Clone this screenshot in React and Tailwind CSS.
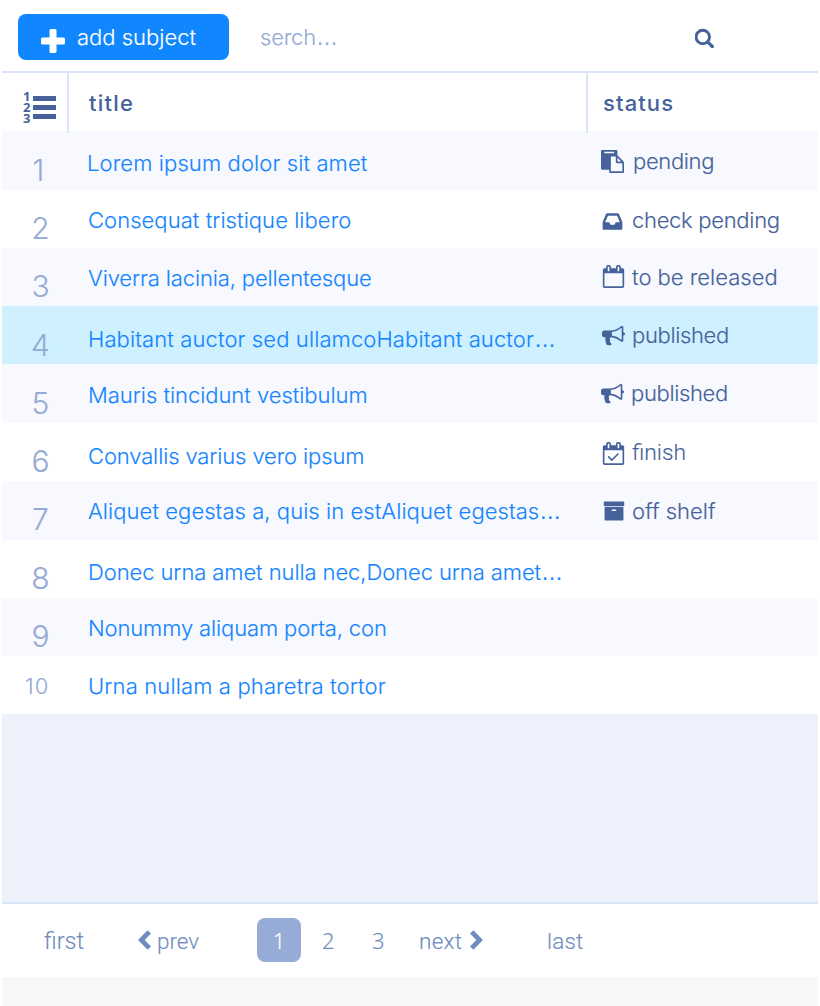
import React from "react";

const ICONS = {
  paste: "M768 1664h896v-640h-416q-40 0-68-28t-28-68v-416h-384v1152zm256-1440v-64q0-13-9.5-22.5t-22.5-9.5h-704q-13 0-22.5 9.5t-9.5 22.5v64q0 13 9.5 22.5t22.5 9.5h704q13 0 22.5-9.5t9.5-22.5zm256 672h299l-299-299v299zm512 128v672q0 40-28 68t-68 28h-960q-40 0-68-28t-28-68v-160h-544q-40 0-68-28t-28-68v-1344q0-40 28-68t68-28h1088q40 0 68 28t28 68v328q21 13 36 28l408 408q28 28 48 76t20 88z",
  inbox: "M1151 960h316q-1-3-2.5-8.5t-2.5-7.5l-212-496h-708l-212 496q-1 3-2.5 8.5t-2.5 7.5h316l95 192h320zm513 30v482q0 26-19 45t-45 19h-1408q-26 0-45-19t-19-45v-482q0-62 25-123l238-552q10-25 36.5-42t52.5-17h832q26 0 52.5 17t36.5 42l238 552q25 61 25 123z",
  bullhorn: "M1664 640q53 0 90.5 37.5t37.5 90.5-37.5 90.5-90.5 37.5v384q0 52-38 90t-90 38q-417-347-812-380-58 19-91 66t-31 100.5 40 92.5q-20 33-23 65.5t6 58 33.5 55 48 50 61.5 50.5q-29 58-111.5 83t-168.5 11.5-132-55.5q-7-23-29.5-87.5t-32-94.5-23-89-15-101 3.5-98.5 22-110.5h-122q-66 0-113-47t-47-113v-192q0-66 47-113t113-47h480q435 0 896-384 52 0 90 38t38 90v384zm-128 604v-954q-394 302-768 343v270q377 42 768 341z",
  calendar: "M192 1664h1408v-1024h-1408v1024zm384-1216v-288q0-14-9-23t-23-9h-64q-14 0-23 9t-9 23v288q0 14 9 23t23 9h64q14 0 23-9t9-23zm768 0v-288q0-14-9-23t-23-9h-64q-14 0-23 9t-9 23v288q0 14 9 23t23 9h64q14 0 23-9t9-23zm384-64v1280q0 52-38 90t-90 38h-1408q-52 0-90-38t-38-90v-1280q0-52 38-90t90-38h128v-96q0-66 47-113t113-47h64q66 0 113 47t47 113v96h384v-96q0-66 47-113t113-47h64q66 0 113 47t47 113v96h128q52 0 90 38t38 90z",
  tick: "M1303 964l-512 512q-10 9-23 9t-23-9l-288-288q-9-10-9-23t9-22l46-46q9-9 22-9t23 9l220 220 444-444q10-9 23-9t22 9l46 46q9 9 9 22t-9 23z",
  archive: "M1088 832q0-26-19-45t-45-19h-256q-26 0-45 19t-19 45 19 45 45 19h256q26 0 45-19t19-45zm576-192v960q0 26-19 45t-45 19h-1408q-26 0-45-19t-19-45v-960q0-26 19-45t45-19h1408q26 0 45 19t19 45zm64-448v256q0 26-19 45t-45 19h-1536q-26 0-45-19t-19-45v-256q0-26 19-45t45-19h1536q26 0 45 19t19 45z",
};

function Icon({ name, className }) {
  return (
    <svg viewBox="0 0 1792 1792" fill="currentColor" className={`shrink-0 ${className}`}>
      <path d={name === "calendarCheck" ? ICONS.calendar : ICONS[name]} />
      {name === "calendarCheck" && <path d={ICONS.tick} />}
    </svg>
  );
}

const ROWS = [
  { n: 1, h: "h-[59px] bg-[#f8f9fe]", np: "pt-[23px]", title: "Lorem ipsum dolor sit amet", tp: "pt-5 pl-[85px] tracking-[0.11px]",
    icon: "paste", ic: "mt-[19px] ml-[1px] size-[23px]", status: "pending", sp: "pt-[18px] ml-[9px] tracking-[-0.35px]" },
  { n: 2, h: "h-[58px] bg-white", np: "pt-[22px]", title: "Consequat tristique libero", tp: "pt-[18px] pl-[86px] tracking-[0.05px]",
    icon: "inbox", ic: "mt-[20px] ml-[1px] size-[23px]", status: "check pending", sp: "pt-[18px] ml-[8px] tracking-[-0.3px]" },
  { n: 3, h: "h-[58px] bg-[#f8f9fe]", np: "pt-[22px]", title: "Viverra lacinia, pellentesque", tp: "pt-[18px] pl-[86px] tracking-[-0.13px]",
    icon: "calendar", ic: "mt-[17px] ml-[2px] size-[23px]", status: "to be released", sp: "pt-[17px] ml-[7px]" },
  { n: 4, h: "h-[58px] bg-[#cff1ff]", np: "pt-[23px]", title: "Habitant auctor sed ullamcoHabitant auctor", more: true, tp: "pt-[21px] pl-[86px] tracking-[0.11px]",
    icon: "bullhorn", ic: "mt-[18px] ml-[2px] size-[23px]", status: "published", sp: "pt-[17px] ml-[7px] tracking-[-0.35px]" },
  { n: 5, h: "h-[59px] bg-[#f8f9fe]", np: "pt-[23px]", title: "Mauris tincidunt vestibulum", tp: "pt-[19px] pl-[86px] tracking-[-0.04px]",
    icon: "bullhorn", ic: "mt-[18px] ml-[1px] size-[23px]", status: "published", sp: "pt-[17px] ml-[7px] tracking-[-0.35px]" },
  { n: 6, h: "h-[58px] bg-white", np: "pt-[22px]", title: "Convallis varius vero ipsum", tp: "pt-[21px] pl-[86px] tracking-[-0.13px]",
    icon: "calendarCheck", ic: "mt-[19px] ml-[2px] size-[23px]", status: "finish", sp: "pt-[18px] ml-[7px] font-[Roboto] text-[22.8px]" },
  { n: 7, h: "h-[59px] bg-[#f8f9fe]", np: "pt-[22px]", title: "Aliquet egestas a, quis in estAliquet egestas", more: true, tp: "pt-[18px] pl-[86px] tracking-[0.06px]",
    icon: "archive", ic: "mt-[19px] ml-[3px] size-[22px]", status: "off shelf", sp: "pt-[18px] ml-[7px]" },
  { n: 8, h: "h-[58px] bg-white", np: "pt-[22px]", title: "Donec urna amet nulla nec,Donec urna amet", more: true, tp: "pt-5 pl-[86px] tracking-[-0.09px]" },
  { n: 9, h: "h-[58px] bg-[#f8f9fe]", np: "pt-[22px]", title: "Nonummy aliquam porta, con", tp: "pt-[18px] pl-[86px] tracking-[-0.13px]" },
  { n: 10, h: "h-[58px] bg-white", np: "pt-[18px]", title: "Urna nullam a pharetra tortor", tp: "pt-[18px] pl-[86px] tracking-[0.14px]" },
];

function Row({ row }) {
  return (
    <div className={`flex ${row.h}`}>
      <div className={`w-0 text-[#96abd6] ${row.np}`}>
        {row.n === 10 ? (
          <span className="block w-12 pl-[23px] text-[22px] leading-6 tracking-[1px]">10</span>
        ) : (
          <span className={`block w-[77px] text-center text-[30px] leading-8 ${row.n === 1 ? "pr-[4px]" : ""}`}>{row.n}</span>
        )}
      </div>
      <div className={`w-[598px] shrink-0 whitespace-nowrap text-[#1485ff] ${row.tp}`}>
        {row.title}
        {row.more && <span className="font-['Liberation_Sans'] tracking-normal">…</span>}
      </div>
      {row.status && (
        <div className="flex text-[#45629b]">
          <Icon name={row.icon} className={row.ic} />
          <span className={`whitespace-nowrap ${row.sp}`}>{row.status}</span>
        </div>
      )}
    </div>
  );
}

export default function App() {
  return (
    <div className="flex h-[1006px] w-[820px] flex-col bg-white px-[2px] font-[Inter,sans-serif] text-[22px] leading-6 font-light [-webkit-text-stroke:0.14px]">
      <header className="flex h-[73px] shrink-0 border-b-2 border-[#d9e4f8]">
        <button className="mt-[14px] ml-4 flex h-[46px] w-[211px] rounded-lg bg-[#1087ff] text-white">
          <svg viewBox="0 0 24 24" className="mt-[15px] ml-[23px] size-6 shrink-0" fill="currentColor">
            <rect x="0" y="8.5" width="24" height="7" rx="1.6" />
            <rect x="8.5" y="0" width="7" height="24" rx="1.6" />
          </svg>
          <span className="mt-[11px] ml-[12px] whitespace-nowrap">add subject</span>
        </button>
        <div className="mt-[25px] ml-[31px] w-[435px] tracking-[-0.2px] text-[#96abd6]">
          serch<span className="font-['Liberation_Sans']">…</span>
        </div>
        <svg viewBox="0 0 20 20" className="mt-[28px] size-5" fill="none" stroke="#45629b">
          <circle cx="7.8" cy="9" r="6.7" strokeWidth="2.9" />
          <path d="M12.6 13.8l4.7 4.7" strokeWidth="3.2" strokeLinecap="round" />
        </svg>
      </header>

      <div className="relative z-10 flex h-[58px] shrink-0 text-[#45629b] [-webkit-text-stroke:0px]">
        <div className="flex w-[65px] gap-[1px] pt-[18px] pl-[21px]">
          <div className="flex w-[9px] flex-col font-['Noto_Sans'] text-[13px] leading-[11px] font-bold">
            <span>1</span>
            <span>2</span>
            <span>3</span>
          </div>
          <div className="mt-[5px] flex w-[23px] flex-col gap-1">
            <i className="h-[5px] bg-[#45629b]" />
            <i className="h-[5px] bg-[#45629b]" />
            <i className="h-[5px] bg-[#45629b]" />
          </div>
        </div>
        <div className="h-[60px] w-[519px] border-l-2 border-[#d9e4f8] pt-[18px] pl-5 font-medium tracking-[1.2px]">title</div>
        <div className="h-[60px] border-l-2 border-[#d9e4f8] pt-[18px] pl-[15px] font-medium tracking-[1.1px]">status</div>
      </div>

      <main className="shrink-0">
        {ROWS.map((row) => (
          <Row key={row.n} row={row} />
        ))}
      </main>
      <div className="h-[188px] shrink-0 bg-[#edf1fc]" />

      <nav className="flex h-[75px] shrink-0 border-t-2 border-[#d9e4f5] font-[Roboto,sans-serif] text-[22.5px] text-[#6f8dc0]">
        <span className="mt-[25px] ml-[42px] w-[94px] text-[23.5px]">first</span>
        <svg viewBox="0 0 13 20" className="mt-[26px] h-5 w-[13px]" fill="none" stroke="currentColor" strokeWidth="4.8">
          <path d="M11.3 1.8L3.4 10l7.9 8.2" />
        </svg>
        <span className="mt-[25px] ml-[6px] w-[100px]">prev</span>
        <span className="mt-[14px] h-11 w-11 rounded-lg bg-[#96abd6] pt-[10px] text-center font-['Noto_Sans'] text-[22px] text-white">1</span>
        <span className="mt-[24px] ml-[21px] w-[50px] font-['Noto_Sans'] text-[22px]">2</span>
        <span className="mt-[24px] w-[47px] font-['Noto_Sans'] text-[22px]">3</span>
        <span className="mt-[25px] w-[51px] tracking-[0.3px]">next</span>
        <svg viewBox="0 0 13 20" className="mt-[26px] h-5 w-[13px]" fill="none" stroke="currentColor" strokeWidth="4.8">
          <path d="M1.7 1.8L9.6 10l-7.9 8.2" />
        </svg>
        <span className="mt-[25px] ml-[64px] tracking-[0.2px]">last</span>
      </nav>
      <footer className="flex-1 bg-[#f7f7f7]" />
    </div>
  );
}
